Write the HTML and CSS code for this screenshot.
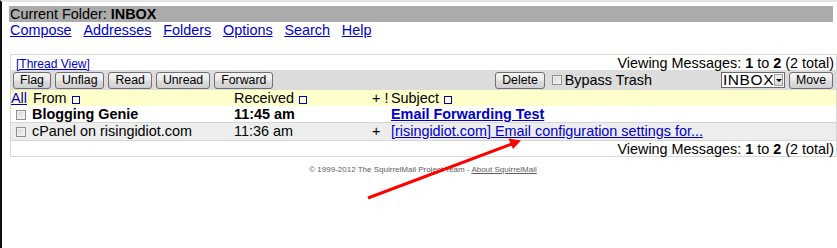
FILE: index.html
```html
<!DOCTYPE html>
<html>
<head>
<meta charset="utf-8">
<link rel="stylesheet" href="styles.css">
</head>
<body>
<div class="page">
  <div class="bar">Current Folder: <b>INBOX</b></div>
  <nav class="nav">
    <a href="#">Compose</a><a href="#">Addresses</a><a href="#">Folders</a><a href="#">Options</a><a href="#">Search</a><a href="#">Help</a>
  </nav>
  <div class="box">
    <div class="r1">
      <a class="tv" href="#">[Thread View]</a>
      <span>Viewing Messages: <b>1</b> to <b>2</b> (2 total)</span>
    </div>
    <div class="r2">
      <div class="grp">
        <button class="btn">Flag</button><button class="btn">Unflag</button><button class="btn">Read</button><button class="btn">Unread</button><button class="btn">Forward</button>
      </div>
      <div class="grp mid">
        <button class="btn">Delete</button><span class="cb cb-gap"></span><span class="bt">Bypass Trash</span>
      </div>
      <div class="grp right">
        <span class="sel"><span class="seltxt">INBOX</span><span class="dd"><span class="tri"></span></span></span><button class="btn">Move</button>
      </div>
    </div>
    <div class="row hdr">
      <span><a href="#">All</a></span>
      <span class="c2">From<span class="sq"></span></span>
      <span>Received<span class="sq"></span></span>
      <span>+&nbsp;!</span>
      <span>Subject<span class="sq"></span></span>
    </div>
    <div class="row">
      <span class="c1"><span class="cb"></span></span>
      <b>Blogging Genie</b>
      <b>11:45 am</b>
      <span></span>
      <span><a class="subj" href="#"><b>Email Forwarding Test</b></a></span>
    </div>
    <div class="row alt">
      <span class="c1"><span class="cb"></span></span>
      <span>cPanel on risingidiot.com</span>
      <span>11:36 am</span>
      <span>+</span>
      <span><a href="#">[risingidiot.com] Email configuration settings for...</a></span>
    </div>
    <div class="r6">Viewing Messages: <b>1</b> to <b>2</b> (2 total)</div>
  </div>
  <div class="footer">© 1999-2012 The SquirrelMail Project Team - <a href="#">About SquirrelMail</a></div>
</div>
<svg class="arrow" width="837" height="248" viewBox="0 0 837 248">
  <line x1="368" y1="198" x2="512" y2="144" stroke="#ff0000" stroke-width="3"/>
  <polygon points="521,140.5 508.5,138.5 513,149" fill="#ff0000"/>
</svg>
</body>
</html>
```
FILE: styles.css
```css
html, body {
  margin: 0;
  padding: 0;
}
body {
  border-left: 2px solid #111;
  border-top: 2px solid #e4e4e4;
  min-height: 248px;
  box-sizing: border-box;
  overflow: hidden;
  font-family: "Liberation Sans", Arial, sans-serif;
  font-size: 14.4px;
  color: #000;
  background: #fff;
  position: relative;
}
a {
  color: #0000cc;
  text-decoration: underline;
}
.page {
  padding: 4px 0 0 7px;
}
.bar {
  background: #ababab;
  height: 16px;
  line-height: 16px;
  padding-left: 1px;
  margin-right: 4px;
}
.nav {
  display: flex;
  gap: 11.8px;
  line-height: 16px;
  margin-left: 1px;
}
.box {
  margin-top: 16px;
  margin-left: 1px;
  border: 1px solid #d8d8d8;
}
.r1 {
  display: flex;
  justify-content: space-between;
  align-items: baseline;
  height: 14px;
  line-height: 14px;
  padding: 1px 2px 0 5px;
}
.tv {
  font-size: 12px;
}
.r2 {
  background: #dcdcdc;
  height: 20px;
  display: flex;
  align-items: center;
  padding: 0 3px 0 2px;
}
.grp {
  display: flex;
  align-items: center;
  gap: 4px;
}
.mid {
  margin-left: auto;
  gap: 0;
}
.right {
  margin-left: 69px;
}
.btn {
  font-family: "Liberation Sans", Arial, sans-serif;
  font-size: 12.3px;
  color: #000;
  height: 17px;
  line-height: 15px;
  padding: 0 6px;
  margin: 0;
  box-sizing: border-box;
  border: 1px solid #707070;
  border-radius: 3px;
  background: linear-gradient(#f3f3f3, #ebebeb 45%, #dddddd 55%, #cfcfcf);
}
.cb {
  display: inline-block;
  width: 10px;
  height: 10px;
  box-sizing: border-box;
  border: 1px solid #8e8f8f;
  background: linear-gradient(135deg, #d6d6d6, #f7f7f7);
  box-shadow: inset 0 0 0 1px #f0f0f0;
}
.cb-gap {
  margin-left: 7px;
}
.bt {
  margin-left: 3px;
  line-height: 16px;
}
.sel {
  display: flex;
  align-items: center;
  width: 64px;
  height: 16px;
  box-sizing: border-box;
  border: 1px solid #6a6a6a;
  background: #fff;
}
.seltxt {
  flex: 1;
  font-size: 15.5px;
  letter-spacing: 0.6px;
  line-height: 14px;
  padding-left: 1px;
}
.dd {
  width: 9px;
  height: 12px;
  margin-right: 1px;
  box-sizing: border-box;
  border: 1px solid #a0a0a0;
  background: linear-gradient(#f0f0f0, #d8d8d8);
  display: flex;
  align-items: center;
  justify-content: center;
}
.tri {
  width: 0;
  height: 0;
  border-left: 3px solid transparent;
  border-right: 3px solid transparent;
  border-top: 3px solid #000;
}
.row {
  display: grid;
  grid-template-columns: 21px 202px 138px 19px 1fr;
  height: 16px;
  line-height: 16px;
  white-space: nowrap;
}
.hdr {
  background: #ffffcc;
}
.c2 {
  padding-left: 1px;
}
.c1 {
  display: flex;
  align-items: center;
  padding-left: 5px;
  padding-top: 1px;
}
.sq {
  display: inline-block;
  width: 6px;
  height: 6px;
  border: 1px solid #0000cc;
  margin-left: 5px;
  vertical-align: -1px;
}
.alt {
  background: #ededed;
  border-top: 1px solid #d6d6d6;
  border-bottom: 1px solid #d6d6d6;
  height: 17px;
  line-height: 17px;
}
.r6 {
  text-align: right;
  height: 14px;
  line-height: 14px;
  padding: 1px 2px 0;
}
.footer {
  margin-top: 8px;
  text-align: center;
  font-size: 8px;
  line-height: 10px;
  color: #5e5e5e;
}
.footer a {
  color: #5e5e5e;
}
.arrow {
  position: absolute;
  top: -2px;
  left: -2px;
  pointer-events: none;
}
```
